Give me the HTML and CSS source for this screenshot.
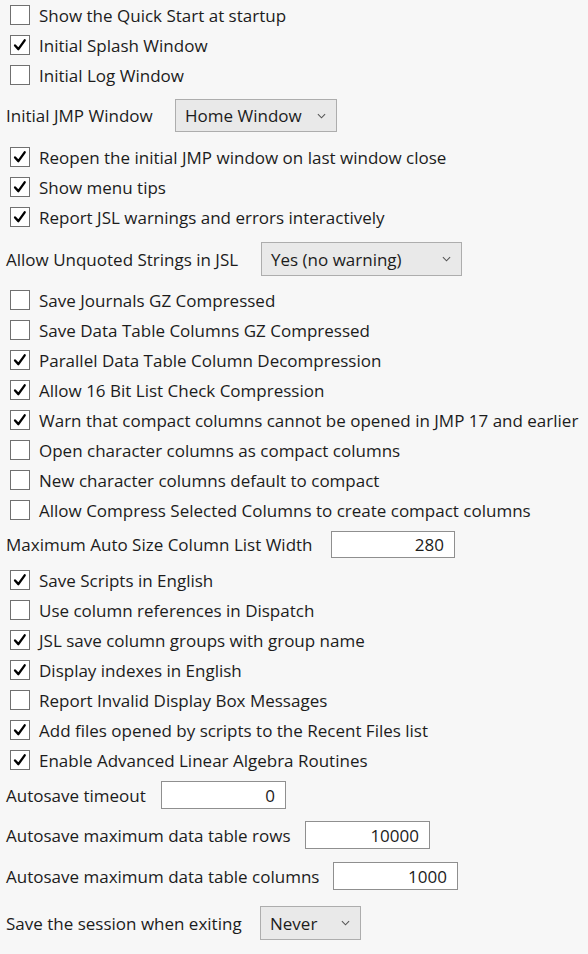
FILE: index.html
```html
<!DOCTYPE html>
<html>
<head>
<meta charset="utf-8">
<link rel="stylesheet" href="styles.css">
</head>
<body>
<div class="panel">
  <div class="group g1">
    <label class="cb"><span class="box"></span>Show the Quick Start at startup</label>
    <label class="cb"><span class="box on"><svg viewBox="0 0 20 20"><path d="M4.5 10.5 L8.2 14.6 L15.2 4.8"/></svg></span>Initial Splash Window</label>
    <label class="cb"><span class="box"></span>Initial Log Window</label>
  </div>
  <div class="field f-jmp">
    <span class="lbl">Initial JMP Window</span>
    <span class="select s-jmp">Home Window<svg class="chev" viewBox="0 0 10 6"><path d="M1 1 L5 5 L9 1"/></svg></span>
  </div>
  <div class="group g2">
    <label class="cb"><span class="box on"><svg viewBox="0 0 20 20"><path d="M4.5 10.5 L8.2 14.6 L15.2 4.8"/></svg></span>Reopen the initial JMP window on last window close</label>
    <label class="cb"><span class="box on"><svg viewBox="0 0 20 20"><path d="M4.5 10.5 L8.2 14.6 L15.2 4.8"/></svg></span>Show menu tips</label>
    <label class="cb"><span class="box on"><svg viewBox="0 0 20 20"><path d="M4.5 10.5 L8.2 14.6 L15.2 4.8"/></svg></span>Report JSL warnings and errors interactively</label>
  </div>
  <div class="field f-jsl">
    <span class="lbl">Allow Unquoted Strings in JSL</span>
    <span class="select s-jsl">Yes (no warning)<svg class="chev" viewBox="0 0 10 6"><path d="M1 1 L5 5 L9 1"/></svg></span>
  </div>
  <div class="group g3">
    <label class="cb"><span class="box"></span>Save Journals GZ Compressed</label>
    <label class="cb"><span class="box"></span>Save Data Table Columns GZ Compressed</label>
    <label class="cb"><span class="box on"><svg viewBox="0 0 20 20"><path d="M4.5 10.5 L8.2 14.6 L15.2 4.8"/></svg></span>Parallel Data Table Column Decompression</label>
    <label class="cb"><span class="box on"><svg viewBox="0 0 20 20"><path d="M4.5 10.5 L8.2 14.6 L15.2 4.8"/></svg></span>Allow 16 Bit List Check Compression</label>
    <label class="cb"><span class="box on"><svg viewBox="0 0 20 20"><path d="M4.5 10.5 L8.2 14.6 L15.2 4.8"/></svg></span>Warn that compact columns cannot be opened in JMP 17 and earlier</label>
    <label class="cb"><span class="box"></span>Open character columns as compact columns</label>
    <label class="cb"><span class="box"></span>New character columns default to compact</label>
    <label class="cb"><span class="box"></span>Allow Compress Selected Columns to create compact columns</label>
  </div>
  <div class="field f-width">
    <span class="lbl">Maximum Auto Size Column List Width</span>
    <span class="input w-width">280</span>
  </div>
  <div class="group g4">
    <label class="cb"><span class="box on"><svg viewBox="0 0 20 20"><path d="M4.5 10.5 L8.2 14.6 L15.2 4.8"/></svg></span>Save Scripts in English</label>
    <label class="cb"><span class="box"></span>Use column references in Dispatch</label>
    <label class="cb"><span class="box on"><svg viewBox="0 0 20 20"><path d="M4.5 10.5 L8.2 14.6 L15.2 4.8"/></svg></span>JSL save column groups with group name</label>
    <label class="cb"><span class="box on"><svg viewBox="0 0 20 20"><path d="M4.5 10.5 L8.2 14.6 L15.2 4.8"/></svg></span>Display indexes in English</label>
    <label class="cb"><span class="box"></span>Report Invalid Display Box Messages</label>
    <label class="cb"><span class="box on"><svg viewBox="0 0 20 20"><path d="M4.5 10.5 L8.2 14.6 L15.2 4.8"/></svg></span>Add files opened by scripts to the Recent Files list</label>
    <label class="cb"><span class="box on"><svg viewBox="0 0 20 20"><path d="M4.5 10.5 L8.2 14.6 L15.2 4.8"/></svg></span>Enable Advanced Linear Algebra Routines</label>
  </div>
  <div class="field f-timeout">
    <span class="lbl">Autosave timeout</span>
    <span class="input w-auto">0</span>
  </div>
  <div class="field f-rows">
    <span class="lbl">Autosave maximum data table rows</span>
    <span class="input w-auto">10000</span>
  </div>
  <div class="field f-cols">
    <span class="lbl">Autosave maximum data table columns</span>
    <span class="input w-auto">1000</span>
  </div>
  <div class="field f-session">
    <span class="lbl">Save the session when exiting</span>
    <span class="select s-session">Never<svg class="chev" viewBox="0 0 10 6"><path d="M1 1 L5 5 L9 1"/></svg></span>
  </div>
</div>
</body>
</html>
```

FILE: styles.css
```css
html, body {
  margin: 0;
  padding: 0;
  background: #f7f7f7;
}
body {
  font-family: "Open Sans", "Noto Sans", sans-serif;
  font-size: 17px;
  color: #1c1c1c;
  width: 588px;
  height: 954px;
  overflow: hidden;
}
.panel {
  display: flex;
  flex-direction: column;
  padding-left: 6px;
}
.group {
  display: flex;
  flex-direction: column;
}
.cb {
  display: flex;
  align-items: center;
  height: 30px;
  padding-left: 4px;
  gap: 9px;
  white-space: nowrap;
}
.box {
  width: 18px;
  height: 18px;
  border: 1px solid #707070;
  background: #ffffff;
  flex: none;
  display: flex;
  align-items: center;
  justify-content: center;
}
.box svg {
  width: 18px;
  height: 18px;
}
.box svg path {
  fill: none;
  stroke: #000;
  stroke-width: 2.6;
  stroke-linecap: round;
  stroke-linejoin: round;
}
.field {
  display: flex;
  align-items: center;
  white-space: nowrap;
}
.select {
  display: flex;
  align-items: center;
  justify-content: space-between;
  box-sizing: border-box;
  border: 1px solid #adadad;
  background: #e9e9e9;
  padding: 0 10px 0 9px;
}
.chev {
  width: 9px;
  height: 6px;
}
.chev path {
  fill: none;
  stroke: #555;
  stroke-width: 1.2;
}
.input {
  display: flex;
  align-items: center;
  justify-content: flex-end;
  box-sizing: border-box;
  border: 1px solid #8f8f8f;
  background: #ffffff;
  padding-right: 10px;
}
.g1 { margin-top: 0; }
.f-jmp { margin-top: 9px; }
.f-jmp .lbl { width: 169px; }
.s-jmp { width: 162px; height: 33px; }
.g2 { margin-top: 10px; }
.f-jsl { margin-top: 10px; }
.f-jsl .lbl { width: 255px; }
.s-jsl { width: 201px; height: 34px; }
.g3 { margin-top: 9px; }
.f-width { margin-top: 6px; }
.f-width .lbl { width: 325px; }
.w-width { width: 124px; height: 27px; }
.g4 { margin-top: 7px; }
.f-timeout { margin-top: 6px; }
.f-timeout .lbl { width: 155px; }
.w-auto { width: 125px; height: 28px; }
.f-rows { margin-top: 12px; }
.f-rows .lbl { width: 299px; }
.f-cols { margin-top: 13px; }
.f-cols .lbl { width: 327px; }
.f-session { margin-top: 16px; }
.f-session .lbl { width: 254px; }
.s-session { width: 101px; height: 34px; }
```
